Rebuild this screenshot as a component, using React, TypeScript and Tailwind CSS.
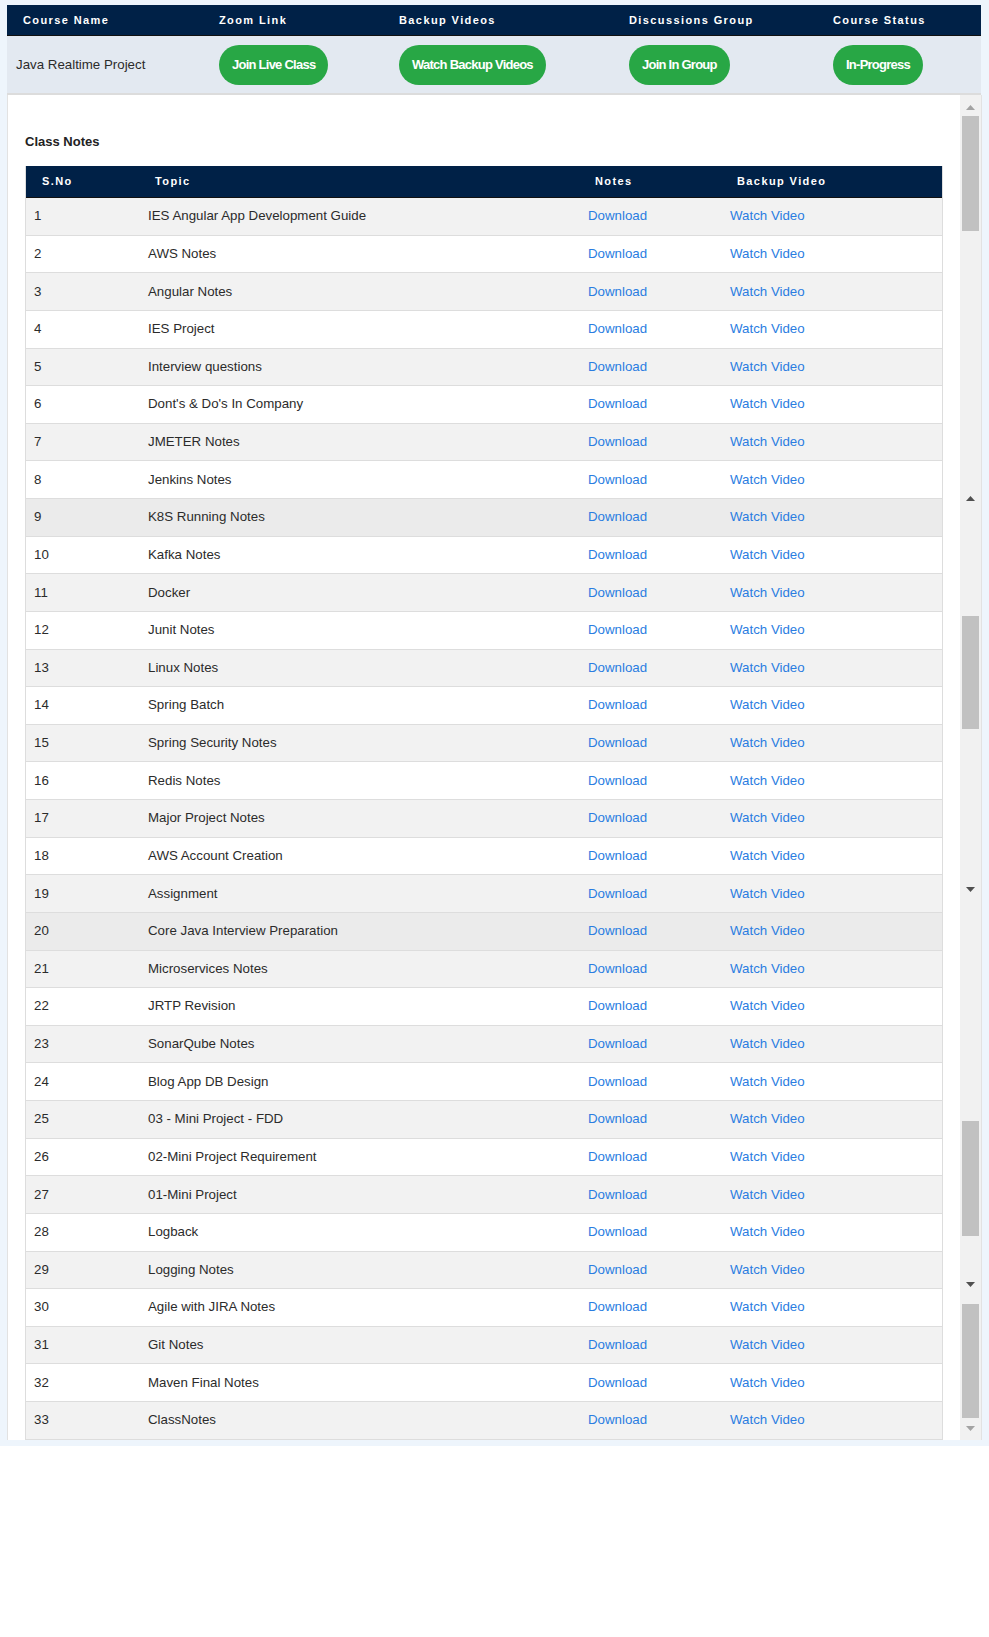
import React from "react";

const topics = [
  "IES Angular App Development Guide",
  "AWS Notes",
  "Angular Notes",
  "IES Project",
  "Interview questions",
  "Dont's & Do's In Company",
  "JMETER Notes",
  "Jenkins Notes",
  "K8S Running Notes",
  "Kafka Notes",
  "Docker",
  "Junit Notes",
  "Linux Notes",
  "Spring Batch",
  "Spring Security Notes",
  "Redis Notes",
  "Major Project Notes",
  "AWS Account Creation",
  "Assignment",
  "Core Java Interview Preparation",
  "Microservices Notes",
  "JRTP Revision",
  "SonarQube Notes",
  "Blog App DB Design",
  "03 - Mini Project - FDD",
  "02-Mini Project Requirement",
  "01-Mini Project",
  "Logback",
  "Logging Notes",
  "Agile with JIRA Notes",
  "Git Notes",
  "Maven Final Notes",
  "ClassNotes",
];

function Arrow({ up, light }: { up?: boolean; light?: boolean }) {
  return (
    <div className="flex h-[8px] items-center justify-center">
      <svg width="9" height="5" viewBox="0 0 9 5">
        <polygon
          points={up ? "0,5 9,5 4.5,0" : "0,0 9,0 4.5,5"}
          fill={light ? "#a3a3a3" : "#505050"}
        />
      </svg>
    </div>
  );
}

// stitched page scrollbar on the right of the notes panel
function Scrollbar() {
  return (
    <div className="flex w-[21px] shrink-0 flex-col bg-[#f1f1f1]">
      <div className="h-[8px]" />
      <Arrow up light />
      <div className="h-[5px]" />
      <div className="mx-[2px] h-[115px] bg-[#c1c1c1]" />
      <div className="h-[263px]" />
      <Arrow up />
      <div className="h-[114px]" />
      <div className="mx-[2px] h-[113px] bg-[#c1c1c1]" />
      <div className="h-[156px]" />
      <Arrow />
      <div className="h-[228px]" />
      <div className="mx-[2px] h-[115px] bg-[#c1c1c1]" />
      <div className="h-[44px]" />
      <Arrow />
      <div className="h-[16px]" />
      <div className="mx-[2px] h-[114px] bg-[#c1c1c1]" />
      <div className="h-[6px]" />
      <Arrow light />
    </div>
  );
}

function GreenButton({ children }: { children: React.ReactNode }) {
  return (
    <span className="inline-flex h-[40px] items-center rounded-full bg-[#28a745] px-[13px] text-[13px] font-bold tracking-[-0.75px] text-white">
      {children}
    </span>
  );
}

export default function App() {
  return (
    <div className="min-h-[1637px] bg-white font-['Liberation_Sans',Arial,sans-serif] text-[#2b2b2b]">
      <div className="bg-[#eef5fc] px-[7px] pb-[6px] pt-[5px]">
        {/* course summary */}
        <div className="mr-px">
          <div className="grid h-[31px] grid-cols-[212px_180px_230px_204px_1fr] items-center border-b border-[#111] bg-[#002147] text-[11px] font-bold tracking-[1.4px] text-white">
            <div className="pl-4">Course Name</div>
            <div>Zoom Link</div>
            <div>Backup Videos</div>
            <div>Discussions Group</div>
            <div>Course Status</div>
          </div>
          <div className="grid h-[59px] grid-cols-[212px_180px_230px_204px_1fr] items-center border-b-2 border-[#dcdcdc] bg-[#e3e9f1] text-[13.3px]">
            <div className="pl-[9px]">Java Realtime Project</div>
            <div>
              <GreenButton>Join Live Class</GreenButton>
            </div>
            <div>
              <GreenButton>Watch Backup Videos</GreenButton>
            </div>
            <div>
              <GreenButton>Join In Group</GreenButton>
            </div>
            <div>
              <GreenButton>In-Progress</GreenButton>
            </div>
          </div>
        </div>

        {/* class notes panel */}
        <div className="flex h-[1345px] border-x border-[#e2e2e2] bg-white">
          <div className="w-[935px] pl-[17px] pt-[39px]">
            <h3 className="mb-4 text-[13px] font-bold leading-4 text-[#222]">Class Notes</h3>
            <div className="w-[918px] border-x border-[#ddd]">
              <div className="grid h-[32px] grid-cols-[113px_440px_142px_1fr] items-center border-b border-[#111] bg-[#002147] text-[11px] font-bold tracking-[1.4px] text-white">
                <div className="pl-4">S.No</div>
                <div className="pl-4">Topic</div>
                <div className="pl-4">Notes</div>
                <div className="pl-4">Backup Video</div>
              </div>
              {topics.map((t, i) => {
                const n = i + 1;
                const bg =
                  n === 9 || n === 20 ? "bg-[#ebebeb]" : n % 2 === 1 ? "bg-[#f2f2f2]" : "bg-white";
                return (
                  <div
                    key={n}
                    className={`grid h-[37.63px] grid-cols-[113px_440px_142px_1fr] items-center border-b border-[#ddd] text-[13.3px] ${bg}`}
                  >
                    <div className="pl-[8px]">{n}</div>
                    <div className="pl-[9px]">{t}</div>
                    <div className="pl-[9px]">
                      <a href="#" className="text-[#2a7de1]">
                        Download
                      </a>
                    </div>
                    <div className="pl-[9px]">
                      <a href="#" className="text-[#2a7de1]">
                        Watch Video
                      </a>
                    </div>
                  </div>
                );
              })}
            </div>
          </div>
          <div className="flex flex-1 justify-end">
            <Scrollbar />
          </div>
        </div>
      </div>
    </div>
  );
}
